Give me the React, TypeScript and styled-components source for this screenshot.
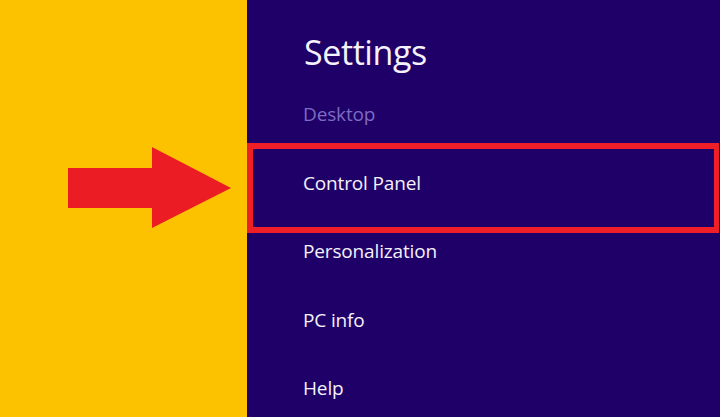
import React from "react";
import styled, { createGlobalStyle } from "styled-components";

const GlobalStyle = createGlobalStyle`
  html, body {
    margin: 0;
    padding: 0;
    height: 417px;
    overflow: hidden;
  }
  body {
    font-family: "Open Sans", "Noto Sans", sans-serif;
  }
`;

const Screen = styled.div`
  display: flex;
  width: 720px;
  height: 417px;
  overflow: hidden;
`;

const YellowSide = styled.div`
  width: 247px;
  flex-shrink: 0;
  background: #fcc200;
  display: flex;
  align-items: flex-start;
  padding: 147px 0 0 68px;
  box-sizing: border-box;
`;

const CharmsPane = styled.div`
  flex: 1;
  background: #1f0068;
  display: flex;
  flex-direction: column;
`;

const Title = styled.h1`
  margin: 35px 0 11px 57px;
  font-size: 34px;
  line-height: 34px;
  font-weight: 400;
  letter-spacing: -0.4px;
  color: #f4f2fb;
`;

const Item = styled.div<{ $muted?: boolean; $highlight?: boolean }>`
  position: relative;
  height: 68.5px;
  line-height: 68.5px;
  padding-left: 56px;
  font-size: 19px;
  letter-spacing: -0.15px;
  color: ${(p) => (p.$muted ? "#7d6cc0" : "#f4f2fb")};

  ${(p) =>
    p.$highlight &&
    `
    &::after {
      content: "";
      position: absolute;
      top: -6px;
      bottom: -16px;
      left: 0;
      right: 1px;
      border: 6px solid #ee1f26;
      border-right-width: 5px;
    }
  `}
`;

const Arrow = () => (
  <svg width="163" height="81" viewBox="0 0 163 81">
    <polygon
      points="0,21 84,21 84,0 163,41 84,81 84,61 0,61"
      fill="#ec1c24"
    />
  </svg>
);

export default function App() {
  return (
    <>
      <GlobalStyle />
      <Screen>
        <YellowSide>
          <Arrow />
        </YellowSide>
        <CharmsPane>
          <Title>Settings</Title>
          <Item $muted>Desktop</Item>
          <Item $highlight>Control Panel</Item>
          <Item>Personalization</Item>
          <Item>PC info</Item>
          <Item>Help</Item>
        </CharmsPane>
      </Screen>
    </>
  );
}
